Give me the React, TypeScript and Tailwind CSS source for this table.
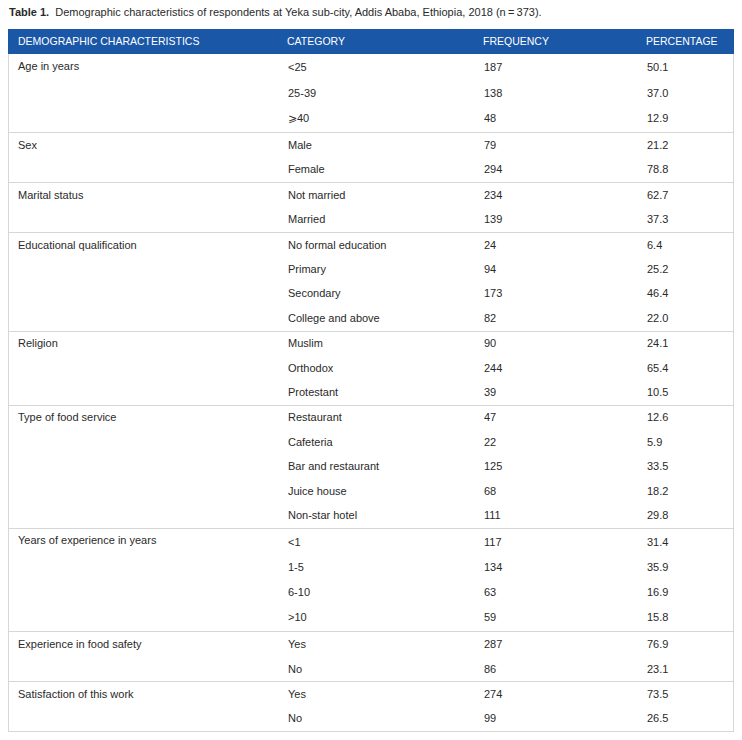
import React from "react";

type Row = { c: string; f: string; p: string; tall?: boolean };
type Group = { label: string; rows: Row[] };

const groups: Group[] = [
  {
    label: "Age in years",
    rows: [
      { c: "<25", f: "187", p: "50.1", tall: true },
      { c: "25-39", f: "138", p: "37.0" },
      { c: "\u2a7e40", f: "48", p: "12.9", tall: true },
    ],
  },
  {
    label: "Sex",
    rows: [
      { c: "Male", f: "79", p: "21.2" },
      { c: "Female", f: "294", p: "78.8" },
    ],
  },
  {
    label: "Marital status",
    rows: [
      { c: "Not married", f: "234", p: "62.7" },
      { c: "Married", f: "139", p: "37.3" },
    ],
  },
  {
    label: "Educational qualification",
    rows: [
      { c: "No formal education", f: "24", p: "6.4" },
      { c: "Primary", f: "94", p: "25.2" },
      { c: "Secondary", f: "173", p: "46.4" },
      { c: "College and above", f: "82", p: "22.0" },
    ],
  },
  {
    label: "Religion",
    rows: [
      { c: "Muslim", f: "90", p: "24.1" },
      { c: "Orthodox", f: "244", p: "65.4" },
      { c: "Protestant", f: "39", p: "10.5" },
    ],
  },
  {
    label: "Type of food service",
    rows: [
      { c: "Restaurant", f: "47", p: "12.6" },
      { c: "Cafeteria", f: "22", p: "5.9" },
      { c: "Bar and restaurant", f: "125", p: "33.5" },
      { c: "Juice house", f: "68", p: "18.2" },
      { c: "Non-star hotel", f: "111", p: "29.8" },
    ],
  },
  {
    label: "Years of experience in years",
    rows: [
      { c: "<1", f: "117", p: "31.4", tall: true },
      { c: "1-5", f: "134", p: "35.9" },
      { c: "6-10", f: "63", p: "16.9" },
      { c: ">10", f: "59", p: "15.8", tall: true },
    ],
  },
  {
    label: "Experience in food safety",
    rows: [
      { c: "Yes", f: "287", p: "76.9" },
      { c: "No", f: "86", p: "23.1" },
    ],
  },
  {
    label: "Satisfaction of this work",
    rows: [
      { c: "Yes", f: "274", p: "73.5" },
      { c: "No", f: "99", p: "26.5" },
    ],
  },
];

export default function App() {
  return (
    <div
      className="w-[742px] h-[740px] bg-white text-[#2a2a2a] text-[11px] leading-none"
      style={{ fontFamily: '"Liberation Sans", Arial, Helvetica, sans-serif' }}
    >
      <div className="pt-[6px] pl-[9px] h-[29px] text-[11px] leading-[13px]">
        <span className="font-bold">Table 1.</span>
        <span>&nbsp; Demographic characteristics of respondents at Yeka sub-city, Addis Ababa, Ethiopia, 2018 (n&#8201;=&#8201;373).</span>
      </div>
      <div className="ml-[8px] w-[726px] border-x border-b border-[#d6d6d6]">
        <div className="grid grid-cols-[270px_196px_163px_1fr] h-[25px] items-center bg-[#1a57a6] text-white text-[10.5px] -mx-px">
          <div className="pl-[10px]">DEMOGRAPHIC CHARACTERISTICS</div>
          <div className="pl-[9px]">CATEGORY</div>
          <div className="pl-[9px]">FREQUENCY</div>
          <div className="pl-[9px]">PERCENTAGE</div>
        </div>
        {groups.map((g, gi) => (
          <div
            key={g.label}
            className={
              "grid grid-cols-[270px_196px_163px_1fr] " +
              (gi > 0 ? "border-t border-[#d6d6d6]" : "")
            }
          >
            <div className="pl-[9px] h-[24.4px] flex items-center">{g.label}</div>
            <div className="col-span-3 flex flex-col">
              {g.rows.map((r, ri) => (
                <div
                  key={ri}
                  className={
                    "grid grid-cols-[196px_163px_1fr] items-center " +
                    (r.tall ? "h-[27px]" : "h-[24.4px]")
                  }
                >
                  <div className="pl-[9px]">{r.c}</div>
                  <div className="pl-[9px]">{r.f}</div>
                  <div className="pl-[9px]">{r.p}</div>
                </div>
              ))}
            </div>
          </div>
        ))}
      </div>
    </div>
  );
}
